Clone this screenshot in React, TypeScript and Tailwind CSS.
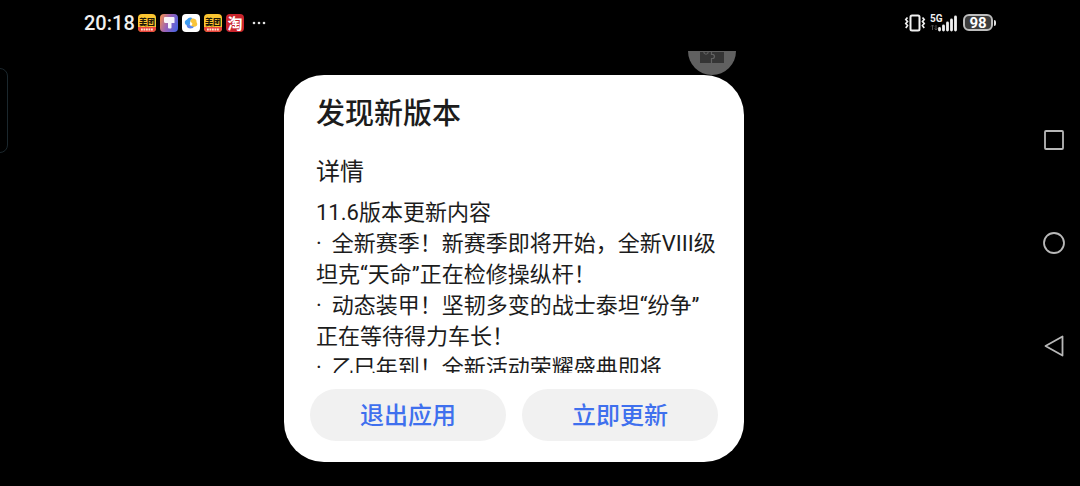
import React from 'react';

const FONT = "font-['Roboto','Noto_Sans_CJK_SC',sans-serif]";

// the zero-width space lets a line break after a closing quote
const notes = [
  { bullet: false, text: '11.6版本更新内容' },
  { bullet: true, text: '全新赛季！新赛季即将开始，全新VIII级坦克“天命”正在检修操纵杆！' },
  { bullet: true, text: '动态装甲！坚韧多变的战士泰坦“纷争”\u200b正在等待得力车长！' },
  { bullet: true, text: '乙巳年到！全新活动荣耀盛典即将' },
];

const MeituanIcon: React.FC = () => (
  <svg className="size-[18px]" viewBox="0 0 18 18" aria-label="美团">
    <rect width="18" height="18" rx="4" fill="#fbc531" />
    <path d="M0 13h18v1a4 4 0 0 1-4 4H4a4 4 0 0 1-4-4z" fill="#e8453c" />
    <text x="9" y="10.5" textAnchor="middle" fontSize="8" fontWeight="900" fill="#1b1708">美团</text>
    <path d="M3 15.5h12" stroke="#ffe3cf" strokeWidth="2" strokeDasharray="1.8 0.7" />
  </svg>
);

const HammerIcon: React.FC = () => (
  <svg className="size-[18px]" viewBox="0 0 18 18">
    <defs>
      <linearGradient id="hammer" x1="0" y1="0.3" x2="1" y2="0.7">
        <stop offset="0" stopColor="#e8895c" />
        <stop offset="0.45" stopColor="#9a62b8" />
        <stop offset="1" stopColor="#4c63e0" />
      </linearGradient>
    </defs>
    <rect width="18" height="18" rx="4" fill="url(#hammer)" />
    <path d="M5 3h8.500q1 0 1 1v5h-3v4.500q0 1-1 1H9q-1 0-1-1V9H5.500Q4 9 4 7.500V4q0-1 1-1z" fill="#fff" fillOpacity="0.92" />
  </svg>
);

const SwirlIcon: React.FC = () => (
  <svg className="size-[18px]" viewBox="0 0 18 18">
    <rect width="18" height="18" rx="4" fill="#fff" />
    <path d="M10.500 4Q7 2.500 5 5.500Q1.500 7 3.500 10.500Q6 12 8 10.500Q7.500 7 10.500 4z" fill="#3d9cf0" />
    <path d="M8.500 8Q8 4 11.500 4.500Q15 5 14.500 8Q16.500 11 13.500 12.500Q11 13.500 9 12Q12 9.500 8.500 8z" fill="#f8c43a" />
    <path d="M4.500 11Q5 14.500 8.500 14.500Q11.500 14.500 12 12.500Q9 13 7.500 10.500z" fill="#5a86ee" />
  </svg>
);

const TaobaoIcon: React.FC = () => (
  <svg className="size-[18px]" viewBox="0 0 18 18" aria-label="淘宝">
    <rect width="18" height="18" rx="4" fill="#c9252d" />
    <text x="9" y="14.500" textAnchor="middle" fontSize="15" fontWeight="700" fill="#fff">淘</text>
  </svg>
);

const VibrateIcon: React.FC = () => (
  <svg className="h-[18px] w-[22px]" viewBox="0 0 22 18" fill="none" stroke="#f0f0f0" strokeWidth="2">
    <rect x="6.500" y="1.500" width="9" height="15" rx="1.500" />
    <path d="M3.500 3.500 1.800 5.500l1.700 2-1.700 2 1.700 2-1.700 2.500M18.500 3.500l1.700 2-1.700 2 1.700 2-1.700 2 1.700 2.500" strokeWidth="1.700" />
  </svg>
);

const SignalIcon: React.FC = () => (
  <svg className="h-6 w-7 overflow-visible" viewBox="0 0 28 24">
    <text x="0" y="11" fontSize="10" fontWeight="700" fill="#f0f0f0">5G</text>
    <path d="M2.500 14v5M1 15.500 2.500 14 4 15.500M6 14v5M4.500 17.500 6 19l1.500-1.500" stroke="#505050" fill="none" />
    <path d="M9.500 19v-1.500M13.500 19v-4M17.500 19v-7M21.500 19V9M25.500 19V6" stroke="#f0f0f0" strokeWidth="2.800" strokeLinecap="round" />
  </svg>
);

const StatusBar: React.FC = () => (
  <header className="flex h-[51px] shrink-0 items-center justify-between pb-[6px] pl-[84px] pr-8 text-[#f0f0f0]">
    <div className="flex items-center gap-1">
      <time className="w-[50px] text-[20px] font-medium leading-6">20:18</time>
      <MeituanIcon />
      <HammerIcon />
      <SwirlIcon />
      <MeituanIcon />
      <TaobaoIcon />
      <svg className="ml-1 h-1 w-[14px]" viewBox="0 0 14 4" fill="#e0e0e0">
        <circle cx="2" cy="2" r="1.300" />
        <circle cx="7" cy="2" r="1.300" />
        <circle cx="12" cy="2" r="1.300" />
      </svg>
    </div>
    <div className="flex items-center gap-1">
      <VibrateIcon />
      <SignalIcon />
      <div className="ml-px flex items-center gap-px">
        <span className="flex h-[17px] w-[30px] items-center justify-center rounded-[6px] border-2 border-[#bdbdbd] bg-[#3c3c3c] text-[15px] font-bold leading-4 text-white">98</span>
        <span className="h-[6px] w-[2px] rounded-r-sm bg-[#e0e0e0]" />
      </div>
    </div>
  </header>
);

const UpdateDialog: React.FC = () => (
  <section role="dialog" aria-labelledby="update-title" className="flex h-full w-[460px] flex-col rounded-[40px] bg-white pb-[21px] pt-5 text-[#1c1c1c]">
    <h1 id="update-title" className="px-8 text-[29px] font-medium leading-[38px]">发现新版本</h1>
    <h2 className="mt-[23px] px-8 text-[24px] leading-8">详情</h2>
    <div className="ml-8 mr-6 mt-[9px] min-h-0 flex-1 overflow-hidden text-[22px] leading-[31px]">
      {notes.map(note => (
        <p key={note.text}>
          {note.bullet && <span className="mr-[10px]">·</span>}
          {note.text}
        </p>
      ))}
    </div>
    <div className="mt-4 grid grid-cols-2 gap-4 px-[26px]">
      {['退出应用', '立即更新'].map(label => (
        <button key={label} type="button" className="h-[52px] rounded-full bg-[#f1f1f1] pt-0.5 text-[24px] font-medium text-[#3f70ee]">
          {label}
        </button>
      ))}
    </div>
  </section>
);

const NavBar: React.FC = () => (
  <nav className="flex w-[52px] shrink-0 flex-col items-center justify-center gap-[79px]">
    <button type="button" aria-label="最近任务">
      <svg className="size-6" viewBox="0 0 24 24" fill="none" stroke="#b8b8b8" strokeWidth="1.800">
        <rect x="3" y="3" width="18" height="18" rx="1" />
      </svg>
    </button>
    <button type="button" aria-label="主屏幕">
      <svg className="size-6" viewBox="0 0 24 24" fill="none" stroke="#b8b8b8" strokeWidth="1.800">
        <circle cx="12" cy="12" r="10" />
      </svg>
    </button>
    <button type="button" aria-label="返回">
      <svg className="size-6" viewBox="0 0 24 24" fill="none" stroke="#b8b8b8" strokeWidth="1.800" strokeLinejoin="round">
        <path d="M20.500 2.500v19L3.500 12z" />
      </svg>
    </button>
  </nav>
);

const App: React.FC = () => (
  <div className={`${FONT} relative flex h-screen min-h-[400px] overflow-hidden bg-black`}>
    {/* edge panel handle */}
    <div className="absolute -left-2 top-[68px] h-[85px] w-4 rounded-lg border border-[#1b272d]" />
    <div className="flex min-w-0 flex-1 flex-col">
      <StatusBar />
      <main className="relative flex min-h-0 flex-1 justify-center py-6">
        {/* floating game assistant, half hidden under the status bar */}
        <svg className="absolute left-1/2 top-0 ml-[174px] h-6 w-12" viewBox="0 0 48 24">
          <path d="M0 0h48a24 24 0 0 1-48 0z" fill="#606060" />
          <path d="M12 1h24v11H12z" fill="#353535" />
          <path d="M16 0v2q2 2.500 4 0V0M23.500 1v2.500h2q2 2 0 4h-2V12" fill="none" stroke="#606060" strokeWidth="1.200" />
        </svg>
        <UpdateDialog />
      </main>
    </div>
    <NavBar />
  </div>
);

export default App;
